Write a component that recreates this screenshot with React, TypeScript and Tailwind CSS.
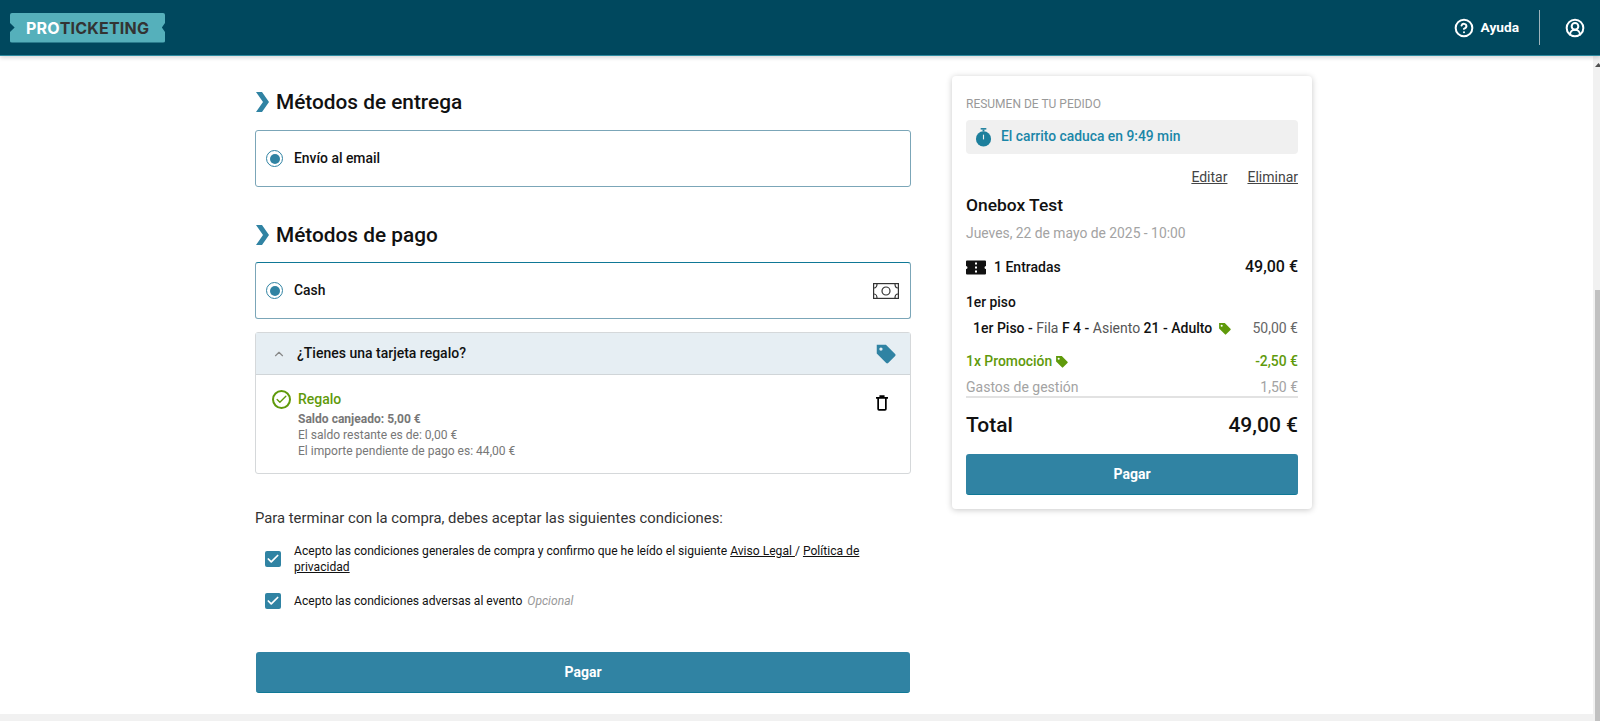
import { Check, ChevronUp, CircleHelp, CircleUserRound } from 'lucide-react';

const roboto = "font-['Roboto',sans-serif]";

function Tag({ className }: { className: string }) {
    return (
        <svg viewBox="0 0 24 24" className={className} fill="currentColor">
            <path fillRule="evenodd" d="M2 2h10.5L23 12.6a1.6 1.6 0 0 1 0 2.2l-8 8a1.6 1.6 0 0 1-2.2 0L2 12z M6.8 5a1.9 1.9 0 1 0 0 3.8a1.9 1.9 0 0 0 0-3.8z" />
        </svg>
    );
}

function SectionTitle({ text, className }: { text: string; className: string }) {
    return (
        <div className={`flex items-center gap-[6px] ${className}`}>
            <svg viewBox="0 0 15 20" className="w-[15px] h-[20px] text-[#3083a3]" fill="currentColor">
                <path d="M1 0h6l7 10l-7 10H1l7-10z" />
            </svg>
            <h2 className="text-[20.8px] font-medium leading-[26px] text-[#111]">{text}</h2>
        </div>
    );
}

function Radio() {
    return (
        <span className="flex items-center justify-center w-[17px] h-[17px] rounded-full border border-[#3083a3]">
            <span className="w-[10px] h-[10px] rounded-full bg-[#3083a3]"></span>
        </span>
    );
}

function MethodBox({ label, children, className }: { label: string; children?: React.ReactNode; className: string }) {
    return (
        <div className={`flex items-center justify-between h-[57px] pl-[10px] pr-[11px] rounded-[3px] border border-[#7ba6b8] ${className}`}>
            <div className="flex items-center gap-[11px]">
                <Radio />
                <span className="text-[13.9px] leading-[18px] mb-[1px] font-medium text-[#111]">{label}</span>
            </div>
            {children}
        </div>
    );
}

function Checkbox() {
    return (
        <span className="flex items-center justify-center shrink-0 w-[16px] h-[16px] rounded-[2px] bg-[#3083a3]">
            <Check size={14} strokeWidth={3} className="text-white" />
        </span>
    );
}

function PayButton({ className }: { className: string }) {
    return (
        <button className={`rounded-[3px] bg-[#3083a3] border-b border-[#0f7896] text-white text-[14px] font-bold ${className}`}>Pagar</button>
    );
}

export default function App() {
    return (
        <div className={`flex flex-col h-screen overflow-hidden bg-white ${roboto}`}>
            <header className="relative z-10 flex items-center justify-between shrink-0 h-[56px] bg-[#00485e] border-b border-[#2e8ba0] shadow-[0_2px_4px_rgba(0,0,0,0.15)]">
                <div className="flex items-center justify-center ml-[10px] w-[155px] h-[30px] rounded-[2px] bg-[#55b0bb] font-['Inter',sans-serif] text-[16px] font-bold tracking-[0.2px] [clip-path:polygon(0_0,100%_0,100%_35%,98%_50%,100%_65%,100%_100%,0_100%,0_65%,3%_50%,0_35%)]">
                    <span className="text-white">PRO</span>
                    <span className="text-[#333]">TICKETING</span>
                </div>
                <div className="flex items-center text-white">
                    <CircleHelp size={20} strokeWidth={2.4} />
                    <span className="ml-[7px] text-[13.7px] font-bold">Ayuda</span>
                    <span className="ml-[20px] w-px h-[35px] bg-[#9fb4bb]"></span>
                    <CircleUserRound size={20} strokeWidth={2.4} className="ml-[25px] mr-[15px]" />
                </div>
            </header>

            <div className="flex flex-1 min-h-0">
                <div className="flex flex-col flex-1 min-w-0">
                    <main className="flex flex-1 min-h-0 items-start pl-[255px]">
                        <div className="w-[656px] pt-[33px]">
                            <SectionTitle text="Métodos de entrega" className="" />
                            <MethodBox label="Envío al email" className="mt-[15px]" />
                            <SectionTitle text="Métodos de pago" className="mt-[35px]" />
                            <MethodBox label="Cash" className="mt-[14px] border-t-[#0f7896]">
                                <svg viewBox="0 0 26 16" className="w-[26px] h-[16px] text-[#333]" fill="none" stroke="currentColor" strokeWidth="1.2">
                                    <rect x="0.6" y="0.6" width="24.8" height="14.8" />
                                    <circle cx="13" cy="8" r="4" />
                                    <path d="M1 5c2 0 3-2 3-4M25 5c-2 0-3-2-3-4M1 11c2 0 3 2 3 4M25 11c-2 0-3 2-3 4" />
                                </svg>
                            </MethodBox>

                            <div className="mt-[13px] rounded-[3px] border border-[#d5d8da] text-[#111]">
                                <div className="flex items-center justify-between h-[42px] pl-[16px] pr-[14px] bg-[#e6eef3] border-b border-[#d0d5d8]">
                                    <div className="flex items-center gap-[11px]">
                                        <ChevronUp size={14} className="text-[#888]" />
                                        <span className="text-[14px] font-medium">¿Tienes una tarjeta regalo?</span>
                                    </div>
                                    <Tag className="w-[21px] h-[21px] text-[#3083a3]" />
                                </div>
                                <div className="flex justify-between h-[98px] pl-[16px] pr-[14px] pt-[15px]">
                                    <div className="flex gap-[7px]">
                                        <span className="flex items-center justify-center shrink-0 w-[19px] h-[19px] rounded-full border-2 border-[#5f9a0b]">
                                            <Check size={13} strokeWidth={2.5} className="text-[#5f9a0b]" />
                                        </span>
                                        <div>
                                            <p className="text-[14px] font-medium leading-[18px] text-[#5f9a0b]">Regalo</p>
                                            <div className="mt-[3px] text-[12.05px] leading-[16px] text-[#777]">
                                                <p className="font-bold">Saldo canjeado: 5,00 €</p>
                                                <p>El saldo restante es de: 0,00 €</p>
                                                <p>El importe pendiente de pago es: 44,00 €</p>
                                            </div>
                                        </div>
                                    </div>
                                    <svg viewBox="0 0 14 18" className="w-[12px] h-[16px] mr-[8px] mt-[5px] text-black" fill="none" stroke="currentColor" strokeWidth="2">
                                        <path d="M0 3h14M4 1h6M2.5 3v13a1 1 0 0 0 1 1h7a1 1 0 0 0 1-1V3" />
                                    </svg>
                                </div>
                            </div>

                            <p className="mt-[35px] text-[14.8px] leading-[18px] text-[#333]">Para terminar con la compra, debes aceptar las siguientes condiciones:</p>
                            <div className="flex items-center gap-[13px] mt-[16px] pl-[10px] pr-[30px] text-[12.1px] leading-[16px] text-[#111]">
                                <Checkbox />
                                <p>Acepto las condiciones generales de compra y confirmo que he leído el siguiente <u>Aviso Legal </u>/ <u>Política de</u> <u>privacidad</u></p>
                            </div>
                            <div className="flex items-center gap-[13px] mt-[18px] pl-[10px] text-[12.1px] leading-[16px] text-[#111]">
                                <Checkbox />
                                <p>Acepto las condiciones adversas al evento <i className="ml-[2px] text-[#999]">Opcional</i></p>
                            </div>
                            <PayButton className="block w-[654px] h-[41px] mt-[43px] mx-[1px]" />
                        </div>

                        <aside className="w-[360px] ml-[41px] mt-[20px] px-[14px] pt-[21px] pb-[14px] rounded-[4px] bg-white shadow-[0_1px_6px_rgba(0,0,0,0.22)] text-[#111]">
                            <p className="text-[12px] leading-[14px] text-[#999]">RESUMEN DE TU PEDIDO</p>
                            <div className="flex items-center gap-[9px] h-[34px] mt-[9px] px-[9px] rounded-[4px] bg-[#f0f0f0] text-[13.85px] font-medium text-[#1a86a8]">
                                <svg viewBox="0 0 18 20" className="w-[17px] h-[19px] text-[#1d7f9c]" fill="currentColor">
                                    <rect x="6" y="0" width="6" height="1.6" />
                                    <rect x="8" y="1.5" width="2" height="2" />
                                    <circle cx="9" cy="11.5" r="8" />
                                    <rect x="8.4" y="7" width="1.2" height="5" fill="#f0f0f0" />
                                </svg>
                                <span className="mb-[1px]">El carrito caduca en 9:49 min</span>
                            </div>
                            <div className="flex justify-end gap-[20px] mt-[14px] text-[14px] leading-[18px] text-[#444]">
                                <u>Editar</u>
                                <u>Eliminar</u>
                            </div>
                            <p className="mt-[7px] text-[17.4px] font-medium leading-[24px]">Onebox Test</p>
                            <p className="mt-[7px] text-[13.85px] leading-[18px] text-[#a3a3a3]">Jueves, 22 de mayo de 2025 - 10:00</p>
                            <div className="flex items-center justify-between mt-[15px] h-[20px]">
                                <div className="flex items-center gap-[8px] text-[14px] font-medium">
                                    <svg viewBox="0 1 20 14" className="w-[20px] h-[15px]" fill="#111">
                                        <path fillRule="evenodd" d="M1 1h18a1 1 0 0 1 1 1v4.5a1.5 1.5 0 0 0 0 3V14a1 1 0 0 1-1 1H1a1 1 0 0 1-1-1V9.5a1.5 1.5 0 0 0 0-3V2a1 1 0 0 1 1-1z M9 3v2h2V3z M9 7v2h2V7z M9 11v2h2v-2z" />
                                    </svg>
                                    <span>1 Entradas</span>
                                </div>
                                <span className="text-[16px] font-medium">49,00 €</span>
                            </div>
                            <p className="mt-[16px] text-[13.8px] font-medium leading-[18px]">1er piso</p>
                            <div className="flex items-center justify-between mt-[8px] h-[18px] pl-[7px] text-[14px]">
                                <div className="flex items-center gap-[6px]">
                                    <span className="text-[#555]"><b className="font-medium text-[#111]">1er Piso - </b>Fila <b className="font-medium text-[#111]">F 4 - </b>Asiento <b className="font-medium text-[#111]">21 - Adulto</b></span>
                                    <Tag className="w-[13px] h-[13px] text-[#5f9a0b]" />
                                </div>
                                <span className="text-[#666]">50,00 €</span>
                            </div>
                            <div className="flex items-center justify-between mt-[15px] h-[18px] text-[13.9px] font-medium text-[#5f9a0b]">
                                <div className="flex items-center gap-[3px]">
                                    <span>1x Promoción</span>
                                    <Tag className="w-[13px] h-[13px]" />
                                </div>
                                <span>-2,50 €</span>
                            </div>
                            <div className="flex items-center justify-between mt-[8px] h-[18px] text-[14px] text-[#a3a3a3]">
                                <span>Gastos de gestión</span>
                                <span>1,50 €</span>
                            </div>
                            <div className="h-[2px] bg-[#e2e2e2]"></div>
                            <div className="flex items-center justify-between h-[28px] mt-[14px] text-[21px] font-medium">
                                <span>Total</span>
                                <span>49,00 €</span>
                            </div>
                            <PayButton className="block w-full h-[41px] mt-[14px]" />
                        </aside>
                    </main>
                    <div className="shrink-0 h-[7px] bg-[#f1f1f1]"></div>
                </div>
                <div className="flex flex-col shrink-0 w-[7px] pl-[2px] bg-[#f1f1f1]">
                    <svg viewBox="0 0 5 4" className="w-[5px] h-[4px] mt-[7px]" fill="#505050"><path d="M3.5 0L7 4H0z" /></svg>
                    <div className="flex-1 mt-[223px] bg-[#c1c1c1]"></div>
                </div>
            </div>
        </div>
    );
}
